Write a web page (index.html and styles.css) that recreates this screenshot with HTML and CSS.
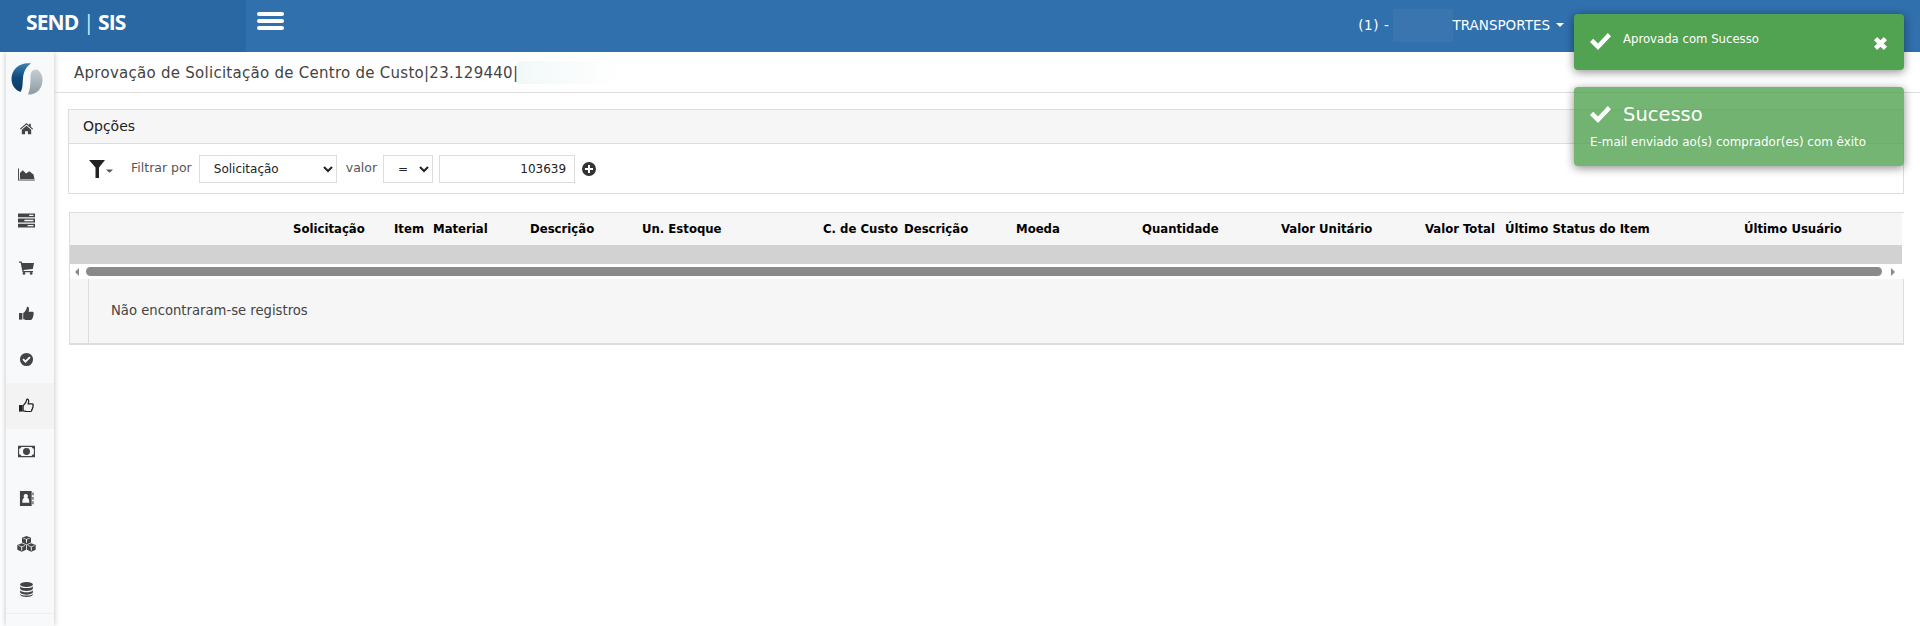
FILE: index.html
```html
<!DOCTYPE html>
<html lang="pt-BR">
<head>
    <meta charset="UTF-8">
    <meta name="viewport" content="width=device-width, initial-scale=1.0">
    <title>SEND | SIS</title>
    <link rel="stylesheet" href="styles.css">
</head>
<body>
    <header class="topbar">
        <div class="brand">SEND <span class="brandBar">|</span> SIS</div>
        <div class="menuBtn"><span></span><span></span><span></span></div>
        <div class="userInfo">
            <span>(1) -</span>
            <span class="blurUser"></span>
            <span>TRANSPORTES</span>
            <span class="caret"></span>
        </div>
    </header>
    <div class="main">
        <nav class="sidebar">
            <div class="sideLogo">
                <svg width="32" height="32" viewBox="0 0 32 32">
                    <defs>
                        <linearGradient id="logoBlue" x1="0" y1="0" x2="0" y2="1"><stop offset="0" stop-color="#3d7fb0"/><stop offset="0.5" stop-color="#0f4a7c"/><stop offset="1" stop-color="#0a3a66"/></linearGradient>
                        <linearGradient id="logoGrey" x1="0" y1="0" x2="0" y2="1"><stop offset="0" stop-color="#c6ced3"/><stop offset="1" stop-color="#8d9aa3"/></linearGradient>
                    </defs>
                    <path fill="url(#logoBlue)" d="M20 0.500C9 -1 0.500 6 0.500 16C0.500 22 4 27 9.500 29C12 25 11.500 20 12 15C12.500 9 15 3.500 20 0.500Z"/>
                    <path fill="url(#logoGrey)" d="M17 31.500C26 32 31.500 25 31.500 17C31.500 12 29.500 8.500 26 6.500C21 6 19.500 9 19.500 14C19.500 21 19 27 17 31.500Z"/>
                </svg>
            </div>
            <a class="sideItem"><svg class="ico" viewBox="0 0 16 16"><path d="M8 2.200L1 8.200l.8.9L8 3.800l6.200 5.300.8-.9-2.400-2V2.800h-1.800v1.800z"/><path d="M8 5L3 9.200V14h3.500v-3.200h3V14H13V9.200z"/></svg></a>
            <a class="sideItem"><svg class="ico icoWide" viewBox="0 0 18 16"><path d="M0 1.500h1V13.500h17v1H0z"/><path d="M2 13V6.500l3-3 3.500 3.500L12 4.500l4.500 3.500 1 5z"/></svg></a>
            <a class="sideItem"><svg class="ico icoWide" viewBox="0 0 16 14"><path fill-rule="evenodd" d="M0 0.500h16V4H0zM10.500 1.600v1.200h4V1.600zM0 5.200h16v3.600H0zM6 6.400v1.200h8.500V6.400zM0 10h16v3.500H0zM9 11.200v1.200h5.500v-1.200z"/></svg></a>
            <a class="sideItem"><svg class="ico" viewBox="0 0 16 16"><path d="M0 1.500h2.800l.5 1.800H16l-1.300 6.300-10 1 .3 1.200h10v1.300H3.800L1.800 2.800H0z"/><circle cx="5.300" cy="14.300" r="1.400"/><circle cx="13" cy="14.300" r="1.400"/></svg></a>
            <a class="sideItem"><svg class="ico" viewBox="0 0 16 16"><path d="M0 7.500h3.600v7H0z"/><path d="M4.500 7.500C6.500 6 8 4 8.500 1c2-.5 2.800 1.500 1.800 5h4c1.700 0 1.700 2 1 2.500.6 1 .3 2-.4 2.400.3 1-.1 1.800-.8 2.100.2 1.200-.7 1.800-1.700 1.800H8c-1.300 0-2-.8-3.500-.8z"/></svg></a>
            <a class="sideItem"><svg class="ico" viewBox="0 0 16 16"><path fill-rule="evenodd" d="M8 1a7 7 0 1 0 0 14A7 7 0 0 0 8 1zM6.900 11.600L3.600 8.300l1.400-1.400 1.900 1.900 4.100-4.100 1.400 1.400z"/></svg></a>
            <a class="sideItem sideActive"><svg class="ico icoBlack" viewBox="0 0 16 16"><path fill-rule="evenodd" d="M0 7.500h3.800v7H0z"/><path fill="none" stroke="currentColor" stroke-width="1.300" d="M4.400 8.200C6.500 6.500 8 4.300 8.500 1.300c1.800-.4 2.300 1.700 1.300 4.900h4.200c1.400 0 1.500 1.800.7 2.300.6 1 .2 1.900-.4 2.300.2 1-.2 1.600-.8 1.900.2 1.100-.6 1.700-1.500 1.700H8c-1.300 0-2-.7-3.600-.7z"/></svg></a>
            <a class="sideItem"><svg class="ico icoWide" viewBox="0 0 18 13"><path fill-rule="evenodd" d="M0 0.500h18v12H0zM1.200 3.700v5.600a2.600 2.600 0 0 1 2.400 2h10.800a2.600 2.600 0 0 1 2.400-2V3.700a2.600 2.600 0 0 1-2.400-2H3.600a2.600 2.600 0 0 1-2.400 2zM9 2.800a3.700 3.700 0 1 0 0 7.400 3.700 3.700 0 0 0 0-7.400z"/><path d="M8.400 4.500h1.100v4h.8v.8H7.700v-.8h.8V5.500l-.7.300z"/></svg></a>
            <a class="sideItem"><svg class="ico" viewBox="0 0 16 16"><path fill-rule="evenodd" d="M1 0h12.500v16H1zM7.200 3.200a2.300 2.300 0 0 0-1.500 4C4.200 7.800 3.500 9.200 3.500 12.500h7.500c0-3.300-.7-4.700-2.200-5.300a2.300 2.300 0 0 0-1.600-4z"/><path d="M14.300 1.500H15.500v3H14.300zM14.300 6.300H15.500v3H14.300zM14.300 11H15.500v3H14.300z"/></svg></a>
            <a class="sideItem"><svg class="ico icoLarge" viewBox="0 0 19 16"><path d="M9.500 0l4.500 1.700v4.800L9.500 8.500 5 6.500V1.700zM4.800 7.200l4.300 1.900v4.700l-4.300 2L0.300 13.800V9zM14.200 7.200L18.700 9v4.800l-4.500 2-4.300-2V9.100z"/><path fill="#f8f9fb" d="M9.500 3L6.500 1.900l-.5.500 3 1.200v3.200h1V3.600l3-1.200-.5-.5zM4.700 10.400L1.700 9.300l-.5.500 3 1.200v3.400h1v-3.400l3-1.200-.5-.5zM14.300 10.400l-3-1.100-.5.500 3 1.200v3.400h1v-3.400l3-1.200-.5-.5z"/></svg></a>
            <a class="sideItem sideLine"><svg class="ico" viewBox="0 0 14 16"><ellipse cx="7" cy="2.600" rx="6.800" ry="2.600"/><path d="M.2 4.500C1 6 4 6.500 7 6.500S13 6 13.800 4.500v2.700C13 8.800 10 9.500 7 9.500S1 8.800.2 7.200zM.2 8.800C1 10.300 4 11 7 11s6-.7 6.800-2.200v2.500C13 12.800 10 13.500 7 13.500S1 12.800.2 11.300zM.2 12.400C1 13.900 4 14.500 7 14.500s6-.6 6.800-2.100v1C13 15.300 10 16 7 16s-6-.7-6.800-2.600z"/></svg></a>
            <a class="sideItem sideLine"></a>
        </nav>
        <div class="content">
            <div class="pageTitle">
                <span>Aprovação de Solicitação de Centro de Custo|23.129440|</span>
                <span class="blurTitle"></span>
            </div>
            <section class="panel">
                <div class="panelHead">Opções</div>
                <div class="filterRow">
                    <svg class="funnel" width="25" height="18" viewBox="0 0 25 18"><path d="M0 0h16L10 7.500V18H6.500V7.500z"/><path d="M17 9.500h7l-3.500 3.300z" fill="#555"/></svg>
                    <label class="filterLabel" for="campo">Filtrar por</label>
                    <select id="campo" class="filterSelect">
                        <option>Solicitação</option>
                    </select>
                    <label class="filterLabel" for="operador">valor</label>
                    <select id="operador" class="opSelect">
                        <option>=</option>
                    </select>
                    <input type="text" class="filterInput" value="103639">
                    <svg class="plusIcon" width="14" height="14" viewBox="0 0 14 14"><path fill-rule="evenodd" d="M7 0a7 7 0 1 0 0 14A7 7 0 0 0 7 0zM6 3h2v3h3v2H8v3H6V8H3V6h3z"/></svg>
                </div>
            </section>
            <section class="gridBox">
                <div class="gridHead">
                    <div class="col c0"></div>
                    <div class="col c1">Solicitação</div>
                    <div class="col c2">Item</div>
                    <div class="col c3">Material</div>
                    <div class="col c4">Descrição</div>
                    <div class="col c5">Un. Estoque</div>
                    <div class="col c6">C. de Custo</div>
                    <div class="col c7">Descrição</div>
                    <div class="col c8">Moeda</div>
                    <div class="col c9">Quantidade</div>
                    <div class="col c10">Valor Unitário</div>
                    <div class="col c11">Valor Total</div>
                    <div class="col c12">Último Status do Item</div>
                    <div class="col c13">Último Usuário</div>
                </div>
                <div class="gridBand"></div>
                <div class="scrollBar">
                    <span class="arrowLeft"></span>
                    <span class="scrollThumb"></span>
                    <span class="arrowRight"></span>
                </div>
                <div class="gridBody">
                    <div class="gridEmpty">Não encontraram-se registros</div>
                </div>
            </section>
        </div>
    </div>
    <div class="toast toastDark">
        <svg class="check" width="21" height="17" viewBox="0 0 21 17"><path d="M0 9l3.200-3.200L8 10.500 17.800 0 21 3.200 8 17z"/></svg>
        <span class="toastText">Aprovada com Sucesso</span>
        <svg class="closeX" width="13" height="13" viewBox="0 0 13 13"><path d="M3.200 0L6.500 3.300 9.800 0 13 3.200 9.700 6.500 13 9.800 9.800 13 6.500 9.700 3.200 13 0 9.800 3.300 6.500 0 3.200z"/></svg>
    </div>
    <div class="toast toastLight">
        <div class="toastHead">
            <svg class="check" width="21" height="17" viewBox="0 0 21 17"><path d="M0 9l3.200-3.200L8 10.500 17.800 0 21 3.200 8 17z"/></svg>
            <span class="toastTitle">Sucesso</span>
        </div>
        <div class="toastMsg">E-mail enviado ao(s) comprador(es) com êxito</div>
    </div>
</body>
</html>
```

FILE: styles.css
```css
* {
    box-sizing: border-box;
}
html, body {
    margin: 0;
    height: 626px;
    overflow: hidden;
}
body {
    font-family: "DejaVu Sans", Verdana, sans-serif;
    font-size: 12px;
    color: #333;
    background: #fff;
}
.topbar {
    display: flex;
    align-items: center;
    height: 52px;
    background: #3070ad;
    color: #fff;
}
.brand {
    width: 246px;
    height: 52px;
    padding-left: 26px;
    background: #2a68a3;
    font-family: "Open Sans", sans-serif;
    font-weight: 700;
    font-size: 21px;
    letter-spacing: -0.9px;
    line-height: 44px;
    white-space: pre;
}
.brandBar {
    color: #cfeaff;
    font-weight: 400;
}
.menuBtn {
    display: flex;
    flex-direction: column;
    gap: 3px;
    width: 27px;
    margin: -10px 0 0 11px;
}
.menuBtn span {
    height: 4px;
    border-radius: 2px;
    background: #fff;
}
.userInfo {
    display: flex;
    align-items: center;
    margin-left: auto;
    margin-right: 356px;
    margin-top: -2px;
    font-size: 13.5px;
}
.blurUser {
    width: 60px;
    height: 33px;
    margin-left: 1px;
    margin-right: 0;
    background: #3a75b0;
}
.userInfo span:first-child {
    letter-spacing: 0.6px;
    margin-right: 2px;
}
.caret {
    width: 0;
    height: 0;
    margin-left: 6px;
    border-left: 4px solid transparent;
    border-right: 4px solid transparent;
    border-top: 4px solid #fff;
}
.main {
    display: flex;
    height: 574px;
    overflow: hidden;
}
.sidebar {
    flex: none;
    width: 48px;
    margin-left: 6px;
    background: #f8f9fb;
    box-shadow: 0 0 6px rgba(0, 0, 0, 0.25);
}
.sideLogo {
    height: 53.500px;
    padding: 11px 0 0 5px;
}
.sideItem {
    display: flex;
    align-items: center;
    justify-content: center;
    height: 46.200px;
    padding-right: 8px;
    color: #444;
}
.sideActive {
    background: #f3f3f3;
}
.sideLine {
    border-bottom: 1px solid #eee;
}
.ico {
    width: 15px;
    height: 15px;
    fill: currentColor;
    color: #444;
}
.icoWide {
    width: 17px;
}
.icoLarge {
    width: 19px;
    height: 16px;
}
.icoBlack {
    color: #222;
}
.content {
    flex: 1;
    min-width: 0;
}
.pageTitle {
    display: flex;
    align-items: center;
    height: 41px;
    padding: 1px 0 0 20px;
    border-bottom: 1px solid #ddd;
    font-size: 15px;
    letter-spacing: 0.27px;
    color: #444;
}
.blurTitle {
    width: 103px;
    height: 23px;
    background: linear-gradient(90deg, #f2f8f8, #fff);
}
.panel {
    margin: 16px 16px 0 14px;
    border: 1px solid #ddd;
    height: 85px;
}
.panelHead {
    height: 34px;
    padding-left: 14px;
    border-bottom: 1px solid #ddd;
    background: #f6f6f6;
    font-size: 14px;
    line-height: 32px;
    color: #222;
}
.filterRow {
    display: flex;
    align-items: center;
    height: 49px;
    padding-left: 20px;
}
.funnel {
    margin: 0 17px 0 0;
    fill: #222;
}
.filterLabel {
    color: #555;
    font-size: 12.500px;
    margin-top: -2px;
}
.filterSelect, .opSelect, .filterInput {
    height: 28px;
    border: 1px solid #ddd;
    background: #fff;
    font-family: inherit;
    font-size: 12px;
    color: #222;
}
.filterSelect {
    width: 138px;
    margin: 0 9px 0 7px;
    padding-left: 10px;
}
.opSelect {
    width: 50px;
    margin-left: 6px;
    padding-left: 10px;
}
.filterInput {
    width: 136px;
    margin-left: 6px;
    padding-right: 8px;
    text-align: right;
}
.plusIcon {
    margin-left: 7px;
    fill: #333;
}
.gridBox {
    margin: 18px 16px 0 15px;
    border: 1px solid #ddd;
    border-right: 0;
    border-bottom: 2px solid #ddd;
}
.gridHead {
    display: flex;
    align-items: center;
    height: 32px;
    margin-right: 2px;
    padding-bottom: 1px;
    background: #f6f6f6;
    font-family: "DejaVu Sans Condensed", "DejaVu Sans", sans-serif;
    font-weight: 700;
    font-size: 13px;
    color: #000;
    white-space: nowrap;
}
.c0 { width: 223px; }
.c1 { width: 101px; }
.c2 { width: 39px; }
.c3 { width: 97px; }
.c4 { width: 112px; }
.c5 { width: 181px; }
.c6 { width: 81px; }
.c7 { width: 112px; }
.c8 { width: 126px; }
.c9 { width: 139px; }
.c10 { width: 144px; }
.c11 { width: 80px; }
.c12 { width: 239px; }
.gridBand {
    height: 19px;
    margin-right: 2px;
    background: #d2d2d2;
}
.scrollBar {
    display: flex;
    align-items: center;
    height: 15px;
    margin-right: 2px;
    padding: 0 7px 0 5px;
    background: #fff;
}
.scrollThumb {
    flex: 1;
    height: 9px;
    margin: 0 9px 0 7px;
    border-radius: 5px;
    background: #8a8a8a;
}
.arrowLeft {
    border-top: 4px solid transparent;
    border-bottom: 4px solid transparent;
    border-right: 4px solid #8a8a8a;
}
.arrowRight {
    border-top: 4px solid transparent;
    border-bottom: 4px solid transparent;
    border-left: 4px solid #8a8a8a;
}
.gridBody {
    height: 64px;
    padding-left: 18px;
    border-right: 1px solid #ddd;
    background: #f6f6f6;
}
.gridEmpty {
    height: 64px;
    padding-left: 22px;
    border-left: 1px solid #ddd;
    font-size: 13.200px;
    line-height: 63px;
    color: #444;
}
.toast {
    position: absolute;
    left: 1574px;
    width: 330px;
    border-radius: 4px;
    color: #fff;
    box-shadow: 0 2px 10px rgba(0, 0, 0, 0.45);
}
.toastDark {
    display: flex;
    top: 14px;
    height: 56px;
    padding: 19px 17px 0 16px;
    background: #51a351;
}
.toastText {
    margin: -1px 0 0 12px;
    font-size: 11.700px;
}
.closeX {
    margin: 4px 0 0 auto;
    fill: #fff;
}
.toastLight {
    top: 87px;
    height: 79px;
    padding: 16px 16px 0;
    background: rgba(81, 163, 81, 0.8);
}
.toastHead {
    display: flex;
    align-items: center;
}
.toastTitle {
    margin-left: 12px;
    font-size: 19.500px;
}
.toastMsg {
    margin-top: 9px;
    font-size: 11.900px;
}
.check {
    flex: none;
    fill: #fff;
}
```
